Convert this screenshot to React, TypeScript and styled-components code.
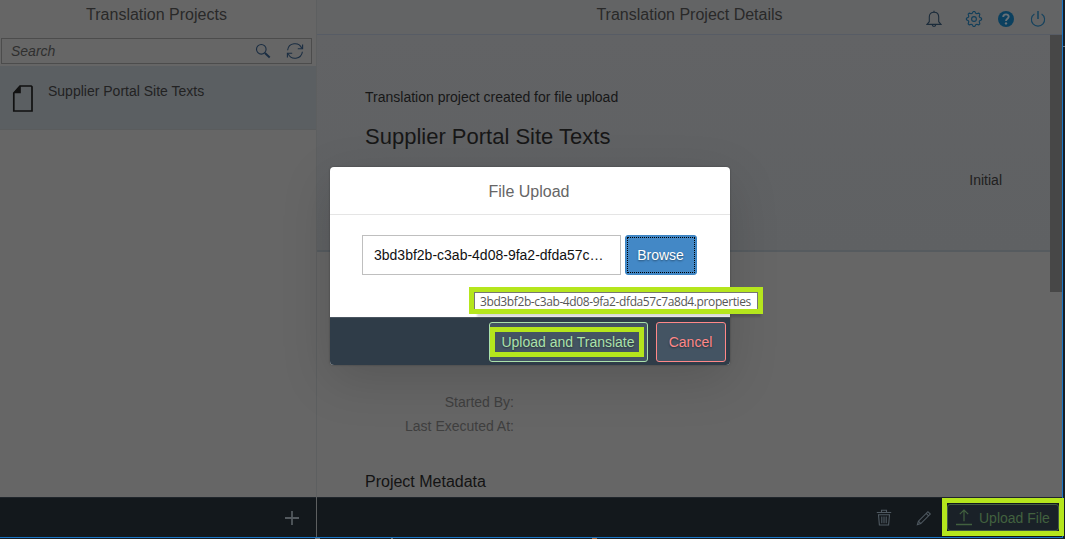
import React from "react";
import styled, { createGlobalStyle } from "styled-components";

const Global = createGlobalStyle`
  * { box-sizing: border-box; }
  body {
    margin: 0;
    overflow: hidden;
    background: #171e24;
    font-family: "Liberation Sans", Arial, sans-serif;
    font-size: 14px;
  }
`;

const Desktop = styled.div`
  position: relative;
  display: flex;
  width: 1065px;
  height: 539px;
  overflow: hidden;
  background: #171e25;
`;

const Shell = styled.div`
  display: flex;
  width: 1063px;
  height: 538px;
  border-right: 1px solid #1a75c5;
  border-bottom: 1px solid #1a75c5;
`;

const EdgeMark = styled.div`
  width: 2px;
  height: 1px;
  margin-top: 46px;
  background: #70767b;
`;

const Master = styled.aside`
  display: flex;
  flex-direction: column;
  width: 317px;
  flex: none;
  border-right: 1px solid #5d5f60;
  background: #666666;
`;

const Detail = styled.main`
  display: flex;
  flex-direction: column;
  flex: 1;
  min-width: 0;
  background: #666666;
`;

const MasterHeader = styled.header`
  height: 38px;
  padding: 5px 3px 0 0;
  color: #292929;
  font-size: 16px;
  line-height: 20px;
  text-align: center;
`;

const SearchField = styled.div`
  display: flex;
  align-items: center;
  width: 311px;
  height: 26px;
  margin: 0 0 2px 1px;
  padding: 0 7px 0 9px;
  border: 1px solid #4c4c4c;
  color: #2f2f2f;
  font-style: italic;
  line-height: 16px;
  svg { display: block; margin-left: 15px; }
  span { flex: 1; }
`;

const ProjectItem = styled.div`
  display: flex;
  height: 64px;
  padding: 17px 12px;
  gap: 14px;
  border-bottom: 1px solid #5a5c5d;
  background: #5b5f62;
  color: #222;
  line-height: 16px;
`;

const Fill = styled.div`
  flex: 1;
`;

const FooterBar = styled.footer`
  display: flex;
  flex: none;
  align-items: center;
  justify-content: flex-end;
  height: 40px;
  border-top: 1px solid #1f252b;
  background: #13181c;
`;

const MasterFooter = styled(FooterBar)`
  padding-right: 17px;
`;

const DetailHeader = styled.header`
  display: grid;
  grid-template-columns: 1fr auto 1fr;
  flex: none;
  height: 35px;
  border-bottom: 1px solid #575c65;
  background: #636465;
  color: #292929;
  font-size: 16px;
  line-height: 20px;
  h1 { grid-column: 2; margin: 5px 0 0 0; font-size: 16px; font-weight: 400; }
`;

const HeaderActions = styled.div`
  display: flex;
  justify-content: flex-end;
  padding: 10px 15px 0 0;
  svg { display: block; }
  svg:first-child { margin-right: 23px; }
  svg + svg + svg { margin-left: 14px; }
`;

const Scroller = styled.div`
  display: flex;
  flex: 1;
  min-height: 0;
`;

const Content = styled.div`
  flex: 1;
`;

const Thumb = styled.div`
  width: 12px;
  height: 257px;
  background: #474747;
`;

const ObjectHeader = styled.section`
  height: 217px;
  padding: 54px 48px 0 48px;
  border-bottom: 2px solid #565b5f;
  background: linear-gradient(#626365, #5f6163);
  color: #171717;
  line-height: 16px;
  h2 { margin: 18px 0 0; font-size: 22px; line-height: 28px; font-weight: 400; }
`;

const Status = styled.div`
  margin-top: 21px;
  color: #202020;
  text-align: right;
`;

const Facts = styled.dl`
  width: 197px;
  margin: 138px 0 0;
  color: #3f3f3f;
  line-height: 24px;
  text-align: right;
  dt { margin: 0; }
`;

const SectionTitle = styled.h3`
  margin: 34px 0 0 48px;
  color: #131313;
  font-size: 16px;
  font-weight: 400;
  line-height: 20px;
`;

const DetailFooter = styled(FooterBar)`
  padding-right: 3px;
  gap: 24px;
  svg { display: block; }
`;

const UploadFile = styled.button`
  display: flex;
  align-items: center;
  gap: 7px;
  width: 112px;
  height: 27px;
  margin-left: -9px;
  padding: 0 0 0 8px;
  border: 1px solid #425c42;
  border-radius: 3px;
  background: #1a2128;
  color: #42613f;
  font: 14px "Liberation Sans", Arial, sans-serif;
  white-space: nowrap;
`;

const Highlight = styled.div<{ $x: number; $y: number; $w: number; $h: number }>`
  position: absolute;
  left: ${(p) => p.$x}px;
  top: ${(p) => p.$y}px;
  width: ${(p) => p.$w}px;
  height: ${(p) => p.$h}px;
  border: 5px solid #b5e61d;
`;

const Dialog = styled.div`
  position: absolute;
  left: 330px;
  top: 167px;
  display: flex;
  flex-direction: column;
  width: 400px;
  height: 198px;
  overflow: hidden;
  border-radius: 4px;
  background: #fff;
`;

const DialogShadow = styled.div`
  position: absolute;
  left: 330px;
  top: 167px;
  width: 400px;
  height: 198px;
  border-radius: 4px;
  box-shadow: 0 0 2px rgba(0, 0, 0, 0.35), 0 15px 50px rgba(0, 0, 0, 0.15);
`;

const DialogTitle = styled.div`
  height: 48px;
  padding: 1px 2px 0 0;
  border-bottom: 1px solid #e5e5e5;
  color: #666;
  font-size: 16px;
  line-height: 48px;
  text-align: center;
`;

const DialogBody = styled.div`
  display: flex;
  flex: 1;
  gap: 4px;
  padding: 20px 32px;
`;

const FileName = styled.div`
  width: 259px;
  height: 40px;
  padding: 0 11px;
  border: 1px solid #bfbfbf;
  color: #111;
  line-height: 38px;
  white-space: nowrap;
`;

const Browse = styled.button`
  width: 72px;
  height: 40px;
  padding: 1px;
  border: 1px solid #3d84c2;
  border-radius: 3px;
  background: #4388c6;
  color: #fff;
  font: 14px "Liberation Sans", Arial, sans-serif;
  text-shadow: 0 1px 2px rgba(0, 0, 0, 0.45);
  span {
    display: block;
    height: 36px;
    padding-right: 1px;
    border: 1px dotted #000;
    line-height: 34px;
  }
`;

const DialogFooter = styled.div`
  display: flex;
  justify-content: flex-end;
  gap: 8px;
  height: 48px;
  padding: 4px;
  border-top: 1px solid #4a5560;
  background: #2f3c48;
`;

const DialogButton = styled.button<{ $tone: string; $width: number }>`
  width: ${(p) => p.$width}px;
  height: 40px;
  padding: 0 1px 0 0;
  border: 1px solid ${(p) => p.$tone};
  border-radius: 3px;
  background: #445463;
  color: ${(p) => p.$tone};
  font: 14px "Liberation Sans", Arial, sans-serif;
  text-shadow: 0 1px 2px rgba(0, 0, 0, 0.45);
`;

const Tooltip = styled.div`
  position: absolute;
  left: 474px;
  top: 292px;
  width: 284px;
  height: 22px;
  padding-left: 5px;
  border: 1px solid #767676;
  background: #fff;
  color: #575757;
  font: 12px/18px "Open Sans", "Noto Sans", sans-serif;
  letter-spacing: -0.39px;
  white-space: nowrap;
  box-shadow: 3px 3px 2px rgba(0, 0, 0, 0.15);
`;

const line = { fill: "none", strokeWidth: 1.1 };

const SearchIcon = () => (
  <svg width="16" height="16" viewBox="0 0 16 16" {...line} stroke="#1a2d42">
    <circle cx="6.3" cy="6.3" r="4.8" />
    <path d="M9.9 9.9 L14.7 14.4" strokeWidth="2" />
  </svg>
);

const RefreshIcon = () => (
  <svg width="18" height="18" viewBox="0 0 18 18" {...line} stroke="#1a2d42">
    <path d="M1.6 8.2 A7.4 7.4 0 0 1 15.8 6.4 M16.4 9.8 A7.4 7.4 0 0 1 2.2 11.6" />
    <path d="M16.6 2.4 V6.7 H11.8 M1.4 15.6 V11.3 H6.2" />
  </svg>
);

const DocIcon = () => (
  <svg width="22" height="30" viewBox="0 0 22 30">
    <path d="M8 3 H19.2 L20 3.8 V28 H1.8 V10 Z" fill="none" stroke="#111" strokeWidth="1.7" />
    <path d="M8.8 2.8 V10.3 H1.5 Z" fill="#111" />
  </svg>
);

const BellIcon = () => (
  <svg width="16" height="18" viewBox="0 0 16 18" {...line} stroke="#1c2c3b">
    <path d="M1 14.4 L3.3 11.7 V7 C3.3 3.8 5.2 2.2 8 2.2 S12.7 3.8 12.7 7 V11.7 L15 14.4 Z" />
    <path d="M8 2.2 V.8 M6.2 14.6 C6.2 17 9.8 17 9.8 14.6" />
  </svg>
);

const gear = Array.from({ length: 32 }, (_, i) => {
  const a = ((i - 1.5) * Math.PI) / 16;
  const r = i % 4 === 1 || i % 4 === 2 ? 7.6 : 5.9;
  return `${i ? "L" : "M"}${(9 + r * Math.cos(a)).toFixed(2)} ${(9 + r * Math.sin(a)).toFixed(2)}`;
}).join(" ");

const GearIcon = () => (
  <svg width="18" height="18" viewBox="0 0 18 18" {...line} stroke="#113e5a">
    <path d={`${gear} Z`} strokeLinejoin="round" />
    <circle cx="9" cy="9" r="2.4" />
  </svg>
);

const HelpIcon = () => (
  <svg width="18" height="18" viewBox="0 0 18 18">
    <circle cx="9" cy="9" r="8" fill="#0b405f" />
    <path d="M6.2 7 C6.2 3.4 11.9 3.6 11.7 6.8 C11.6 8.7 9 8.7 9 10.9" fill="none" stroke="#687178" strokeWidth="1.9" />
    <circle cx="9" cy="13.4" r="1.2" fill="#687178" />
  </svg>
);

const PowerIcon = () => (
  <svg width="18" height="18" viewBox="0 0 18 18" {...line} stroke="#15425e">
    <path d="M5.4 4 A6.6 6.6 0 1 0 12.6 4" />
    <path d="M9 1 V9" strokeWidth="1.5" />
  </svg>
);

const PlusIcon = () => (
  <svg width="14" height="14" viewBox="0 0 14 14" stroke="#53595e" strokeWidth="1.8">
    <path d="M7 0 V14 M0 7 H14" />
  </svg>
);

const TrashIcon = () => (
  <svg width="16" height="17" viewBox="0 0 16 17" {...line} stroke="#4f5961">
    <path d="M.8 3.5 H15.2 M5.5 3.2 V1.2 H10.5 V3.2 M2.5 5.8 H13.5 L12.6 16 H3.4 Z" />
    <path d="M5.8 7.5 V14.2 M8 7.5 V14.2 M10.2 7.5 V14.2" />
  </svg>
);

const PencilIcon = () => (
  <svg width="16" height="16" viewBox="0 0 16 16" {...line} stroke="#4f5961">
    <path d="M1.4 14.6 L2.4 11.2 L11.9 1.7 L14.3 4.1 L4.8 13.6 Z M2.4 11.2 L4.8 13.6 M10.2 3.4 L12.6 5.8" />
  </svg>
);

const UploadIcon = () => (
  <svg width="16" height="17" viewBox="0 0 16 17" fill="none" stroke="#42613f" strokeWidth="1.2">
    <path d="M8 12.2 V1 M3.8 5.2 L8 1 L12.2 5.2" />
    <path d="M0 15.5 H16" strokeWidth="1.5" />
  </svg>
);

const TaskbarMarks = styled.div`
  position: absolute;
  left: 0;
  bottom: 0;
  width: 1065px;
  height: 1px;
  background: linear-gradient(90deg, transparent 315px, #777 315px 320px, transparent 320px 391px, #777 391px 393px, transparent 393px 592px, #a8693c 592px 597px, transparent 597px);
`;

export default function App() {
  return (
    <>
      <Global />
      <Desktop>
        <Shell>
          <Master>
            <MasterHeader>Translation Projects</MasterHeader>
            <SearchField>
              <span>Search</span>
              <SearchIcon />
              <RefreshIcon />
            </SearchField>
            <ProjectItem>
              <DocIcon />
              Supplier Portal Site Texts
            </ProjectItem>
            <Fill />
            <MasterFooter>
              <PlusIcon />
            </MasterFooter>
          </Master>
          <Detail>
            <DetailHeader>
              <h1>Translation Project Details</h1>
              <HeaderActions>
                <BellIcon />
                <GearIcon />
                <HelpIcon />
                <PowerIcon />
              </HeaderActions>
            </DetailHeader>
            <Scroller>
              <Content>
                <ObjectHeader>
                  Translation project created for file upload
                  <h2>Supplier Portal Site Texts</h2>
                  <Status>Initial</Status>
                </ObjectHeader>
                <Facts>
                  <dt>Started By:</dt>
                  <dt>Last Executed At:</dt>
                </Facts>
                <SectionTitle>Project Metadata</SectionTitle>
              </Content>
              <Thumb />
            </Scroller>
            <DetailFooter>
              <TrashIcon />
              <PencilIcon />
              <UploadFile>
                <UploadIcon />
                Upload File
              </UploadFile>
            </DetailFooter>
          </Detail>
        </Shell>
        <EdgeMark />
        <TaskbarMarks />
        <DialogShadow />
        <Dialog>
          <DialogTitle>File Upload</DialogTitle>
          <DialogBody>
            <FileName>3bd3bf2b-c3ab-4d08-9fa2-dfda57c…</FileName>
            <Browse>
              <span>Browse</span>
            </Browse>
          </DialogBody>
          <DialogFooter>
            <DialogButton $tone="#abe2ab" $width={159}>Upload and Translate</DialogButton>
            <DialogButton $tone="#ff8888" $width={70}>Cancel</DialogButton>
          </DialogFooter>
        </Dialog>
        <Tooltip>3bd3bf2b-c3ab-4d08-9fa2-dfda57c7a8d4.properties</Tooltip>
        <Highlight $x={469} $y={287} $w={294} $h={27} />
        <Highlight $x={490} $y={327} $w={154} $h={30} />
        <Highlight $x={942} $y={498} $w={122} $h={38} />
      </Desktop>
    </>
  );
}
